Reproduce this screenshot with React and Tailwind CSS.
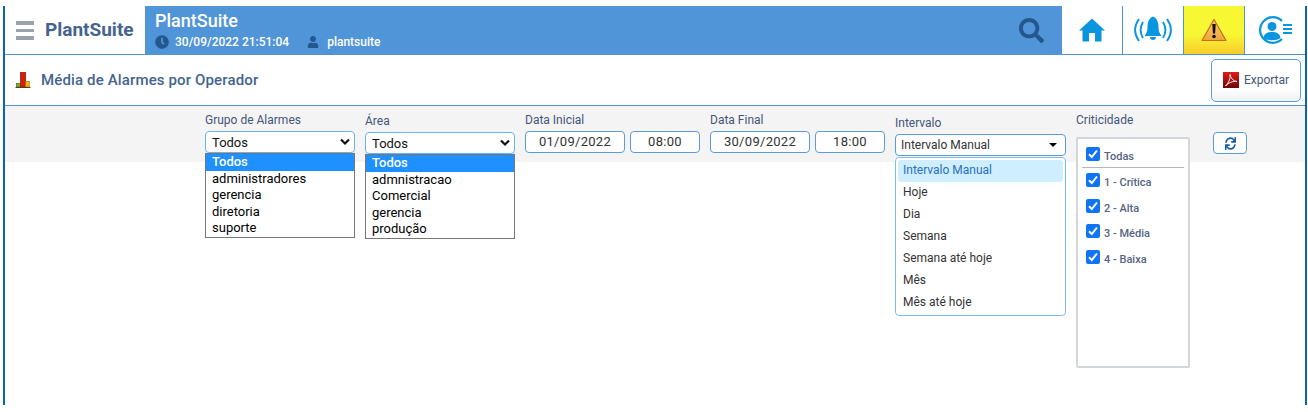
import React from "react";
import { FaSearch, FaUser, FaClock, FaSync } from "react-icons/fa";

function Check() {
  return (
    <span className="flex h-[14px] w-[14px] shrink-0 items-center justify-center rounded-[2px] bg-[#0f75f5]">
      <svg viewBox="0 0 14 14" className="h-[14px] w-[14px]"><path d="M3 7.200 L5.800 10 L11 3.500" fill="none" stroke="#fff" strokeWidth="2" /></svg>
    </span>
  );
}

function CheckRow({ label, className = "" }) {
  return (
    <div className={"flex h-[14px] items-center gap-[4px] " + className}>
      <Check />
      <span className="mt-[6px] text-[11px] font-medium leading-[14px] text-[#56647f]">{label}</span>
    </div>
  );
}

function NativeList({ items }) {
  return (
    <div className="flex flex-col border border-[#767676] bg-white text-[13px] text-black">
      {items.map((t, i) => (
        <div key={t} className={"pl-[6px] leading-[16.4px] " + (i === 0 ? "h-[17px] bg-[#1e90ff] font-medium text-white" : "h-[16.4px]")}>{t}</div>
      ))}
    </div>
  );
}

function SelectBox({ text }) {
  return (
    <div className="flex h-[22px] items-center justify-between rounded-[4px] border border-[#6cb0f0] bg-white pl-[6px] pr-[3px] text-[13px] text-[#111]">
      <span className="mt-[1px]">{text}</span>
      <svg viewBox="0 0 12 8" className="h-[8px] w-[12px]"><path d="M2 1.500 L6 5.500 L10 1.500" fill="none" stroke="#111" strokeWidth="2.200" /></svg>
    </div>
  );
}

function DateBox({ text, w }) {
  return <div className={"flex h-[22px] items-center justify-center rounded-[4px] border border-[#5b9bd9] bg-white text-[13px] tracking-[0.3px] text-[#333] " + w}>{text}</div>;
}

function Label({ children }) {
  return <div className="text-[12px] leading-[14px] text-[#45557a]">{children}</div>;
}

function ChartIcon() {
  return (
    <svg viewBox="0 0 16 16" className="h-[16px] w-[16px]">
      <rect x="1.300" y="11.300" width="4" height="3.700" fill="#7fae1d" stroke="#3c6a10" strokeWidth="0.600" />
      <rect x="5.300" y="0.300" width="5.400" height="14.700" fill="#d81e05" stroke="#8a1205" strokeWidth="0.600" />
      <rect x="10.700" y="9.300" width="3.800" height="5.700" fill="#eeb314" stroke="#a87a0a" strokeWidth="0.600" />
      <path d="M0.500 15.500 H15.500" stroke="#5a3a20" strokeWidth="1" />
    </svg>
  );
}

export default function App() {
  return (
    <div className="h-[412px] w-[1308px] overflow-hidden bg-white pl-[3px] pt-[6px] font-['Roboto',sans-serif]">
      <div className="flex h-[399px] w-[1304px] flex-col border-x-2 border-x-[#0b63b5]">
        {/* top bar */}
        <div className="flex h-[49px] shrink-0 border-b border-[#4f94d6]">
          <div className="flex w-[140px] shrink-0 items-center pl-[11px]">
            <div className="flex w-[18px] flex-col gap-[4px] pt-[1px]">
              <span className="h-[3.500px] bg-[#9aa2ab]" />
              <span className="h-[3.500px] bg-[#9aa2ab]" />
              <span className="h-[3.500px] bg-[#9aa2ab]" />
            </div>
            <span className="ml-[11px] text-[19px] font-bold text-[#44648f]">PlantSuite</span>
          </div>
          <div className="flex flex-1 items-center justify-between bg-[#5095d8] pl-[10px] pr-[18px]">
            <div className="flex flex-col text-white">
              <span className="text-[18px] font-medium leading-[19px]">PlantSuite</span>
              <div className="mt-[5px] flex items-center text-[12px] font-medium leading-[14px]">
                <FaClock className="h-[14px] w-[14px] text-[#23578e]" />
                <span className="ml-[6px]">30/09/2022 21:51:04</span>
                <FaUser className="ml-[18px] h-[12px] w-[12px] text-[#23578e]" />
                <span className="ml-[8px]">plantsuite</span>
              </div>
            </div>
            <FaSearch className="h-[25px] w-[25px] text-[#23578e]" />
          </div>
          <div className="flex w-[61px] shrink-0 items-center justify-center border-r border-[#4f94d6]">
            <svg viewBox="0 0 26 24" className="h-[24px] w-[26px]" fill="#0a95e0">
              <path d="M13 0.500 L26 12.500 H22.500 V23.500 H16 V15 H10 V23.500 H3.500 V12.500 H0 Z" />
            </svg>
          </div>
          <div className="flex w-[61px] shrink-0 items-center justify-center border-r border-[#4f94d6]">
            <svg viewBox="0 0 38 28" className="h-[28px] w-[38px]" fill="none" stroke="#0a95e0" strokeWidth="1.900">
              <path d="M5 3 C0 10 0 18 5 25" />
              <path d="M9 6 C6 11 6 17 9 22" />
              <path d="M33 3 C38 10 38 18 33 25" />
              <path d="M29 6 C32 11 32 17 29 22" />
              <path d="M19 0.500 C15 2 13.500 6 13.500 11 C13.500 15 12.500 17 10.500 20 H27.500 C25.500 17 24.500 15 24.500 11 C24.500 6 23 2 19 0.500 Z" fill="#0a95e0" stroke="none" />
              <path d="M16 21 H22 C22 25 16 25 16 21 Z" fill="#0a95e0" stroke="none" />
            </svg>
          </div>
          <div className="flex w-[61px] shrink-0 items-center justify-center border-r border-[#4f94d6] bg-[linear-gradient(#f7f733_0%,#f7f733_60%,#f9cc2c_100%)]">
            <svg viewBox="0 0 26 24" className="h-[24px] w-[26px]">
              <defs>
                <linearGradient id="w" x1="0" y1="0" x2="0" y2="1"><stop offset="0" stopColor="#f8d270" /><stop offset="1" stopColor="#eea53a" /></linearGradient>
              </defs>
              <path d="M13 1.500 L25 22.500 H1 Z" fill="url(#w)" stroke="#c86a1c" strokeWidth="1.200" strokeLinejoin="round" />
              <path d="M11.300 6 H14.700 L14.100 15.500 H11.900 Z" fill="#111" />
              <circle cx="13" cy="18.500" r="1.800" fill="#111" />
            </svg>
          </div>
          <div className="flex w-[60px] shrink-0 items-center justify-center">
            <svg viewBox="0 0 36 28" className="h-[28px] w-[36px]">
              <path d="M25 5 A12.800 12.800 0 1 0 25 23" fill="none" stroke="#0a95e0" strokeWidth="2.200" />
              <circle cx="15" cy="10.500" r="4.500" fill="#0a95e0" />
              <path d="M6.500 22 C7 17 11 16 15 16 C19 16 23 17 23.500 22 C20 25 10 25 6.500 22 Z" fill="#0a95e0" />
              <path d="M26 9 H35 M26 13 H35 M26 17 H35" stroke="#0a95e0" strokeWidth="2" />
            </svg>
          </div>
        </div>

        {/* title row */}
        <div className="flex h-[51px] shrink-0 items-center justify-between border-b border-[#4f94d6] pl-[10px] pr-[4px]">
          <div className="flex items-center">
            <ChartIcon />
            <span className="ml-[10px] text-[15px] font-medium tracking-[0.14px] text-[#44648f]">Média de Alarmes por Operador</span>
          </div>
          <button className="flex h-[43px] w-[90px] items-center justify-center rounded-[5px] border border-[#5b9bd9] bg-[linear-gradient(#ffffff_70%,#f0f0f0)]">
            <svg viewBox="0 0 16 16" className="h-[16px] w-[16px]">
              <defs>
                <linearGradient id="p" x1="0" y1="0" x2="0" y2="1"><stop offset="0" stopColor="#e01b1b" /><stop offset="1" stopColor="#6e0505" /></linearGradient>
              </defs>
              <rect width="16" height="16" fill="url(#p)" />
              <path d="M2.500 14 C6 10.500 7.500 6 7 2.500 C8 6.500 10 9 14 9.500 C10 9 5.500 10.500 2.500 14 Z" fill="none" stroke="#fff" strokeWidth="0.900" />
            </svg>
            <span className="ml-[5px] text-[12px] text-[#45557a]">Exportar</span>
          </button>
        </div>

        {/* filter band */}
        <div className="h-[56px] shrink-0 bg-[#f4f4f4]">
          <div className="flex pl-[200px] pt-[7px]">
            <div className="w-[150px]">
              <Label>Grupo de Alarmes</Label>
              <div className="mt-[4px]"><SelectBox text="Todos" /></div>
              <NativeList items={["Todos", "administradores", "gerencia", "diretoria", "suporte"]} />
            </div>
            <div className="ml-[10px] w-[150px] pt-[1px]">
              <Label>Área</Label>
              <div className="mt-[4px]"><SelectBox text="Todos" /></div>
              <NativeList items={["Todos", "admnistracao", "Comercial", "gerencia", "produção"]} />
            </div>
            <div className="ml-[10px]">
              <Label>Data Inicial</Label>
              <div className="mt-[4px] flex gap-[5px]">
                <DateBox text="01/09/2022" w="w-[100px]" />
                <DateBox text="08:00" w="w-[70px]" />
              </div>
            </div>
            <div className="ml-[10px]">
              <Label>Data Final</Label>
              <div className="mt-[4px] flex gap-[5px]">
                <DateBox text="30/09/2022" w="w-[100px]" />
                <DateBox text="18:00" w="w-[70px]" />
              </div>
            </div>
            <div className="ml-[10px] w-[171px] pt-[3px]">
              <Label>Intervalo</Label>
              <div className="mt-[4px] flex h-[22px] items-center justify-between rounded-[4px] border border-[#5b9bd9] bg-white pl-[5px] pr-[8px] text-[12px] text-[#333]">
                <span>Intervalo Manual</span>
                <span className="h-0 w-0 border-x-[4px] border-t-[4px] border-x-transparent border-t-black" />
              </div>
              <div className="mt-[1px] flex h-[159px] flex-col rounded-[4px] border border-[#7dbcf5] bg-white p-[2px] text-[12px] text-[#333]">
                <div className="flex h-[22px] items-center rounded-[3px] bg-[#cfeeff] pb-[1px] pl-[5px] text-[#2a6fc4]">Intervalo Manual</div>
                {["Hoje", "Dia", "Semana", "Semana até hoje", "Mês", "Mês até hoje"].map((t) => (
                  <div key={t} className="flex h-[22px] items-center pb-[1px] pl-[5px]">{t}</div>
                ))}
              </div>
            </div>
            <div className="ml-[10px] w-[114px]">
              <Label>Criticidade</Label>
              <div className="mt-[10px] h-[231px] rounded-[2px] border-2 border-[#d3d6da] bg-white px-[4px] pt-[8px]">
                <CheckRow label="Todas" className="ml-[4px]" />
                <div className="mt-[6px] border-b border-[#b5b8bc]" />
                <CheckRow label="1 - Crítica" className="ml-[4px] mt-[5px]" />
                <CheckRow label="2 - Alta" className="ml-[4px] mt-[12px]" />
                <CheckRow label="3 - Média" className="ml-[4px] mt-[11px]" />
                <CheckRow label="4 - Baixa" className="ml-[4px] mt-[12px]" />
              </div>
            </div>
            <button className="ml-[23px] mt-[19px] flex h-[22px] w-[34px] items-center justify-center rounded-[4px] border border-[#5b9bd9] bg-white">
              <FaSync className="h-[13px] w-[11px] text-[#1a5ca6]" preserveAspectRatio="none" />
            </button>
          </div>
        </div>
      </div>
    </div>
  );
}
